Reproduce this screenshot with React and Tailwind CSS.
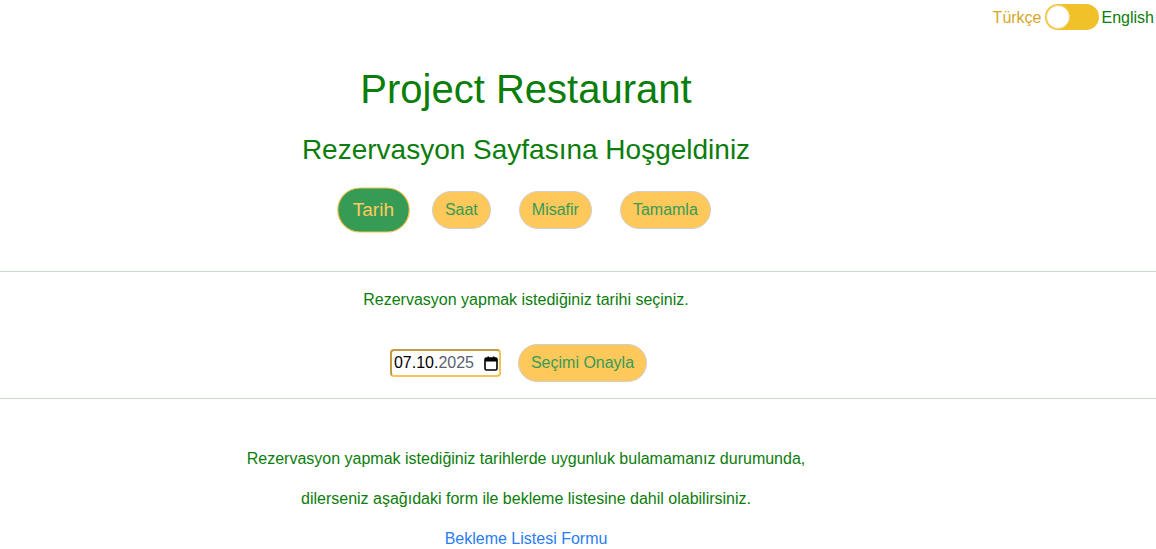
import React from "react";

const steps = [
  { label: "Tarih", active: true },
  { label: "Saat" },
  { label: "Misafir" },
  { label: "Tamamla" },
];

const CalendarIcon = () => (
  <svg width="14" height="15" viewBox="0 0 14 15" className="ml-[10px]">
    <rect x="1" y="2" width="12" height="12" rx="1.5" fill="none" stroke="#000" strokeWidth="1.6" />
    <rect x="1" y="2" width="12" height="3.5" fill="#000" />
    <rect x="3.5" y="0.5" width="1.6" height="3" fill="#000" />
    <rect x="8.9" y="0.5" width="1.6" height="3" fill="#000" />
  </svg>
);

const LangToggle = () => (
  <div className="flex items-center justify-end pt-[4px] pr-[2px] h-[30px] text-[16px]">
    <span className="text-[#d6a62a] pt-[1px]">Türkçe</span>
    <div className="ml-[3px] mr-[3px] w-[54px] h-[26px] rounded-full bg-[#f1c129] flex items-center pl-[1px]">
      <div className="w-[24px] h-[24px] rounded-full bg-white border border-[#f3d77a]" />
    </div>
    <span className="text-[#0b7d0b] pt-[1px]">English</span>
  </div>
);

export default function App() {
  return (
    <div className="min-h-[549px] bg-white font-['Liberation_Sans',Arial,sans-serif] text-[#0b7d0b]">
      <LangToggle />

      <div className="w-[1052px] flex flex-col items-center">
        <h1 className="mt-[36px] text-[40px] leading-[46px]">Project Restaurant</h1>
        <h3 className="mt-[22px] text-[28px] leading-[32px]">Rezervasyon Sayfasına Hoşgeldiniz</h3>

        <div className="mt-[25px] flex items-center gap-[28px] pl-[2px]">
          {steps.map((s) =>
            s.active ? (
              <button
                key={s.label}
                className="h-[38px] px-[12px] rounded-full border border-[#f2c14d] bg-[#369b55] text-[16px] text-[#ffc95c] scale-[1.19]"
              >
                {s.label}
              </button>
            ) : (
              <button
                key={s.label}
                className="h-[38px] px-[12px] rounded-full border border-[#cfcfcf] bg-[#fec85b] text-[16px] text-[#369b55]"
              >
                {s.label}
              </button>
            )
          )}
        </div>
      </div>

      <hr className="mt-[42px] border-0 h-[1px] bg-[#c6dfc6]" />

      <div className="w-[1052px] flex flex-col items-center">
        <p className="mt-[19px] text-[16px] leading-[18px]">
          Rezervasyon yapmak istediğiniz tarihi seçiniz.
        </p>
        <div className="mt-[35px] flex items-center pr-[15px]">
          <div className="w-[111px] h-[28px] rounded-[4px] border-2 border-[#f2c451] border-t-[#c49a45] border-l-[#c49a45] flex items-center pl-[2px] text-[16px]">
            <span className="text-black">07.10.</span>
            <span className="text-[#5a5f73]">2025</span>
            <CalendarIcon />
          </div>
          <button className="ml-[17px] h-[38px] px-[12px] rounded-full border border-[#cfcfcf] bg-[#fec85b] text-[16px] text-[#369b55]">
            Seçimi Onayla
          </button>
        </div>
      </div>

      <hr className="mt-[16px] border-0 h-[1px] bg-[#c6dfc6]" />

      <div className="w-[1052px] flex flex-col items-center text-[16px] leading-[18px]">
        <p className="mt-[51px]">
          Rezervasyon yapmak istediğiniz tarihlerde uygunluk bulamamanız durumunda,
        </p>
        <p className="mt-[22px]">dilerseniz aşağıdaki form ile bekleme listesine dahil olabilirsiniz.</p>
        <a href="#" className="mt-[22px] text-[#2a7cf4]">
          Bekleme Listesi Formu
        </a>
      </div>
    </div>
  );
}
